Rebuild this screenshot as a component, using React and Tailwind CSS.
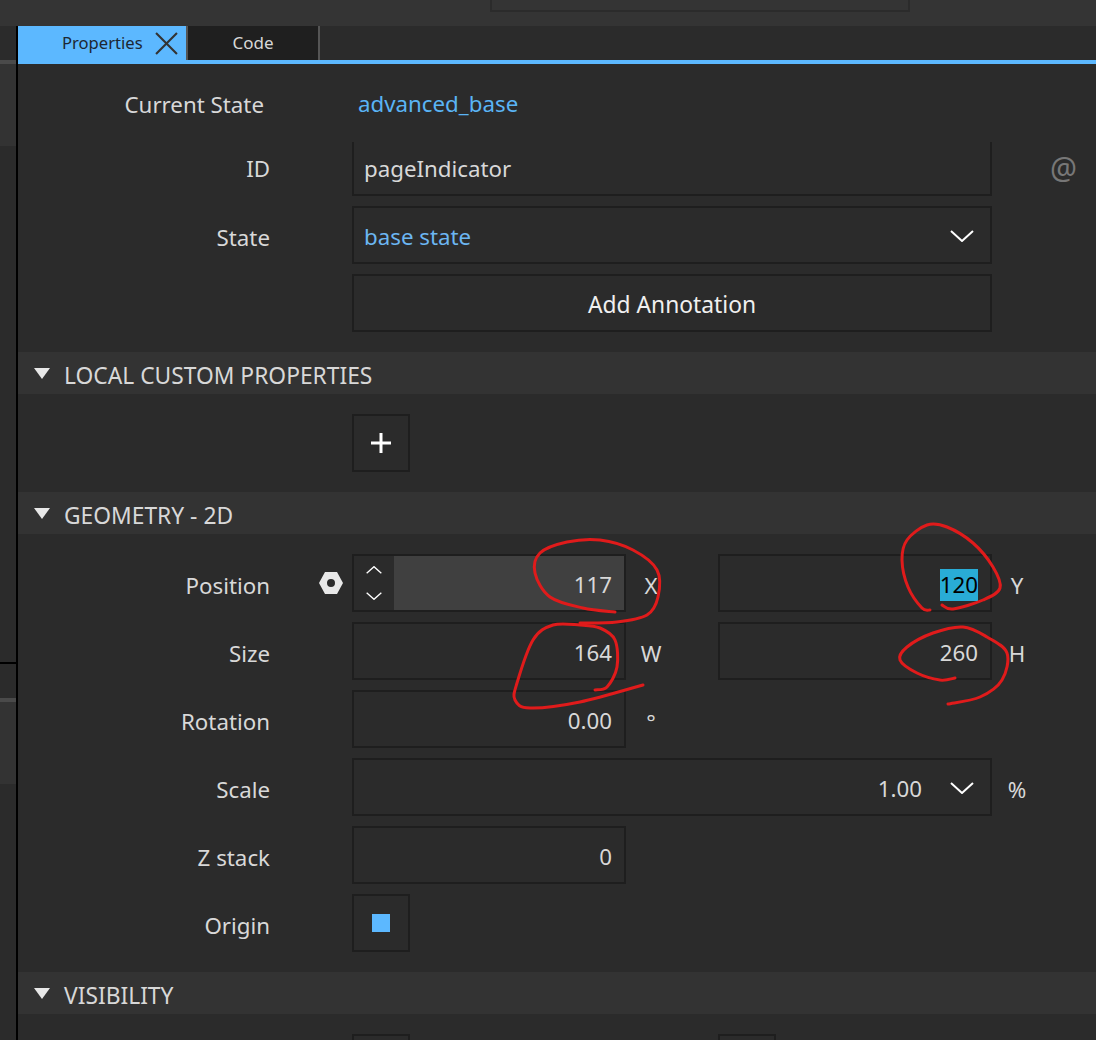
import React from 'react';

const font = { fontFamily: '"Noto Sans", sans-serif' };

// smooth line through hand-traced points
const smooth = (pts) => {
  let d = `M${pts[0][0]} ${pts[0][1]}`;
  for (let i = 0; i < pts.length - 1; i++) {
    const p0 = pts[i - 1] || pts[i];
    const p1 = pts[i];
    const p2 = pts[i + 1];
    const p3 = pts[i + 2] || p2;
    d += ` C${p1[0] + (p2[0] - p0[0]) / 6} ${p1[1] + (p2[1] - p0[1]) / 6} ${p2[0] - (p3[0] - p1[0]) / 6} ${p2[1] - (p3[1] - p1[1]) / 6} ${p2[0]} ${p2[1]}`;
  }
  return d;
};

const marks = [
  [[615,612],[583,608],[550,597],[535,573],[540,553],[567,542],[600,540],[633,550],[657,570],[658,597],[647,615],[617,622],[580,623]],
  [[595,690],[607,687],[617,667],[615,640],[600,628],[580,625],[553,625],[533,640],[517,683],[515,700],[530,708],[580,702],[643,685]],
  [[930,610],[922,608],[908,587],[902,560],[907,540],[927,525],[947,527],[973,543],[993,567],[1000,588],[983,600],[953,609],[942,605]],
  [[955,678],[940,680],[917,673],[900,660],[907,647],[933,633],[963,627],[987,637],[1007,653],[1002,680],[980,697],[948,704]],
];

const Chevron = ({ className, up }) => (
  <svg className={className} viewBox="0 0 24 12" fill="none" stroke="#ffffff" strokeWidth="2">
    <path d={up ? 'M1 11 L12 1 L23 11' : 'M1 1 L12 11 L23 1'} />
  </svg>
);

const Section = ({ title }) => (
  <div className="flex items-center h-[42px] bg-[#333333] text-[22.8px] text-[#d8d8d8]">
    <svg className="ml-4 w-4 h-[11px]" viewBox="0 0 16 11">
      <path d="M0 0 H16 L8 11 Z" fill="#e8e8e8" />
    </svg>
    <span className="ml-[14px] pt-[7px]">{title}</span>
  </div>
);

const Label = ({ children }) => (
  <div className="w-[252px] shrink-0 pt-[6px] text-right text-[22.3px] text-[#d8d8d8]">{children}</div>
);

const NumBox = ({ value, selected }) => (
  <div className="flex items-center justify-end w-[274px] h-[58px] border-2 border-[#1e1e1e] pr-3 pt-1 text-[22.3px] text-[#d8d8d8]">
    {selected ? <span className="bg-[#29acd6] text-black leading-8">{value}</span> : value}
  </div>
);

const Unit = ({ children }) => (
  <div className="w-[50px] pt-[6px] text-center text-[22.3px] text-[#d8d8d8]">{children}</div>
);

const Row = ({ label, slot, children }) => (
  <div className="flex items-center mt-[10px]">
    <Label>{label}</Label>
    <div className="flex items-center justify-end w-[82px] shrink-0 pr-[9px]">{slot}</div>
    {children}
  </div>
);

const IconBox = ({ children }) => (
  <div className="flex items-center justify-center w-[58px] h-[58px] border-2 border-[#1e1e1e]">{children}</div>
);

export default function App() {
  return (
    <div className="relative w-[1096px] h-[1040px] overflow-hidden bg-[#2b2b2b]" style={font}>
      <div className="h-[26px] pl-[490px] bg-[#343434]">
        <div className="w-[420px] h-3 border-2 border-t-0 border-[#2b2b2b]" />
      </div>

      <div className="flex">
        <div className="flex flex-col w-4 h-[1014px] shrink-0">
          <div className="h-[34px] shrink-0" />
          <div className="h-1 shrink-0 bg-[#4a4a4a]" />
          <div className="h-[82px] shrink-0 bg-[#333333]" />
          <div className="h-[516px] shrink-0" />
          <div className="h-0.5 shrink-0 bg-black" />
          <div className="h-[34px] shrink-0" />
          <div className="h-1 shrink-0 bg-[#4a4a4a]" />
          <div className="h-[82px] shrink-0 bg-[#333333]" />
        </div>
        <div className="w-0.5 shrink-0 bg-black" />

        <div className="flex-1 min-w-0">
          <div className="flex h-[38px] border-b-4 border-[#5cb8ff]">
            <div className="flex items-center w-[168px] h-[38px] shrink-0 bg-[#5cb8ff] text-[#1c2733] text-[16.6px] pl-11">
              <span className="pb-1">Properties</span>
              <svg className="ml-3 mb-1 w-[23px] h-[23px]" viewBox="0 0 22 22" fill="none" stroke="#333333" strokeWidth="2">
                <path d="M1 1 L21 21 M21 1 L1 21" />
              </svg>
            </div>
            <div className="flex items-center justify-center w-[134px] h-[34px] bg-[#1f1f1f] border-x-2 border-[#555555] text-[17px] text-[#d8d8d8]">
              Code
            </div>
          </div>

          <div className="flex items-center h-[78px] pt-[2px] text-[22.3px]">
            <div className="w-[246px] shrink-0 pt-[2px] text-right text-[#d8d8d8]">Current State</div>
            <div className="ml-[94px] text-[#5ab4f5]">advanced_base</div>
          </div>

          <div className="flex items-center">
            <div className="w-[252px] shrink-0 text-right text-[22.3px] text-[#d8d8d8]">ID</div>
            <div className="flex items-center ml-[82px] w-[640px] h-[54px] border-2 border-t-0 border-[#1e1e1e] pl-[10px] pt-[2px] text-[22.3px] text-[#d8d8d8]">
              pageIndicator
            </div>
            <div className="ml-[58px] pb-1 text-[30px] text-[#777777]">@</div>
          </div>

          <Row label="State">
            <div className="flex items-center justify-between w-[640px] h-[58px] border-2 border-[#1e1e1e] pl-[10px] pr-[16px] text-[22.3px] text-[#6cb6f2]">
              <span className="pt-[3px]">base state</span>
              <Chevron className="mt-[2px] w-6 h-3" />
            </div>
          </Row>

          <Row>
            <div className="flex items-center justify-center w-[640px] h-[58px] border-2 border-[#1e1e1e] pt-[5px] text-[22.8px] text-[#f0f0f0]">
              Add Annotation
            </div>
          </Row>

          <div className="mt-5">
            <Section title="LOCAL CUSTOM PROPERTIES" />
          </div>
          <div className="ml-[334px] mt-5 mb-5">
            <IconBox>
              <svg className="w-5 h-5" viewBox="0 0 20 20" fill="none" stroke="#ffffff" strokeWidth="3">
                <path d="M10 0 V20 M0 10 H20" />
              </svg>
            </IconBox>
          </div>

          <Section title="GEOMETRY - 2D" />

          <div className="h-[10px]" />
          <Row
            label="Position"
            slot={
              <svg className="w-6 h-[22px]" viewBox="0 0 24 22">
                <path fillRule="evenodd" d="M6 0 H18 L24 11 L18 22 H6 L0 11 Z M12 7 A4 4 0 1 0 12 15 A4 4 0 1 0 12 7 Z" fill="#e8e8e8" />
              </svg>
            }
          >
            <div className="flex w-[274px] h-[58px] border-2 border-[#1e1e1e] text-[22.3px] text-[#d8d8d8]">
              <div className="flex flex-col items-center justify-center gap-[18px] w-10 shrink-0">
                <Chevron up className="w-4 h-2" />
                <Chevron className="w-4 h-2" />
              </div>
              <div className="flex items-center justify-end flex-1 pr-3 pt-1 bg-[#404040]">117</div>
            </div>
            <Unit>X</Unit>
            <div className="ml-[42px]">
              <NumBox value="120" selected />
            </div>
            <Unit>Y</Unit>
          </Row>

          <Row label="Size">
            <NumBox value="164" />
            <Unit>W</Unit>
            <div className="ml-[42px]">
              <NumBox value="260" />
            </div>
            <Unit>H</Unit>
          </Row>

          <Row label="Rotation">
            <NumBox value="0.00" />
            <Unit>°</Unit>
          </Row>

          <Row label="Scale">
            <div className="flex items-center justify-end w-[640px] h-[58px] border-2 border-[#1e1e1e] pr-[16px] text-[22.3px] text-[#d8d8d8]">
              <span className="pt-1">1.00</span>
              <Chevron className="ml-7 mt-[2px] w-6 h-3" />
            </div>
            <Unit>%</Unit>
          </Row>

          <Row label="Z stack">
            <NumBox value="0" />
          </Row>

          <Row label="Origin">
            <IconBox>
              <div className="w-[18px] h-[18px] bg-[#5cb8ff]" />
            </IconBox>
          </Row>

          <div className="mt-5">
            <Section title="VISIBILITY" />
          </div>

          <div className="flex mt-5 ml-[334px] gap-[308px]">
            <IconBox />
            <IconBox />
          </div>
        </div>
      </div>

      <svg className="absolute inset-0 w-[1096px] h-[1040px] pointer-events-none" viewBox="0 0 1096 1040" fill="none" stroke="#e01b1b" strokeWidth="3" strokeLinecap="round">
        {marks.map((m, i) => (
          <path key={i} d={smooth(m)} />
        ))}
      </svg>
    </div>
  );
}
